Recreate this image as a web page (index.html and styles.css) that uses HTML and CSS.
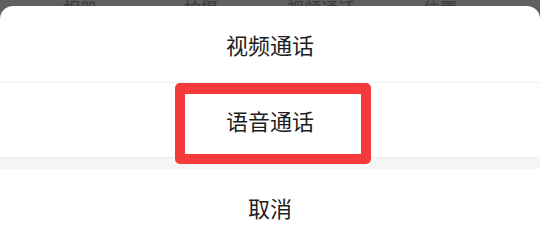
FILE: index.html
```html
<!DOCTYPE html>
<html lang="zh">
<head>
<meta charset="utf-8">
<link rel="stylesheet" href="styles.css">
</head>
<body>
<div class="backdrop">
  <div class="tabs">
    <span class="tab t1">相册</span>
    <span class="tab t2">拍摄</span>
    <span class="tab t3">视频通话</span>
    <span class="tab t4">位置</span>
  </div>
</div>
<div class="sheet">
  <div class="item first">视频通话</div>
  <div class="item second">语音通话<div class="highlight"></div></div>
  <div class="band"></div>
  <div class="item cancel">取消</div>
</div>
</body>
</html>
```
FILE: styles.css
```css
html, body {
  margin: 0;
  padding: 0;
}
body {
  width: 540px;
  height: 245px;
  overflow: hidden;
  background: #5f5f5f;
  font-family: "Noto Sans CJK SC", "Noto Sans", sans-serif;
}
.backdrop {
  height: 6px;
  overflow: hidden;
}
.tabs {
  position: relative;
  height: 6px;
}
.tab {
  position: absolute;
  bottom: -12px;
  font-size: 17px;
  line-height: 20px;
  color: #3a3a3a;
  transform: translateX(-50%);
}
.t1 { left: 80px; }
.t2 { left: 201px; }
.t3 { left: 321px; }
.t4 { left: 440px; }
.sheet {
  background: #fff;
  border-radius: 13px 13px 0 0;
  height: 239px;
}
.item {
  display: flex;
  align-items: center;
  justify-content: center;
  font-size: 22px;
  color: #1e1e1e;
}
.first {
  height: 76px;
  border-bottom: 1px solid #efefef;
}
.second {
  height: 74px;
  position: relative;
}
.band {
  height: 12px;
  background: #f5f5f5;
  border-top: 1px solid #efefef;
  box-sizing: border-box;
}
.cancel {
  height: 76px;
}
.highlight {
  position: absolute;
  left: 175px;
  top: 0;
  width: 196px;
  height: 81px;
  box-sizing: border-box;
  border: 10px solid #f43a3a;
  border-top-width: 11px;
  border-radius: 5px;
}
```
